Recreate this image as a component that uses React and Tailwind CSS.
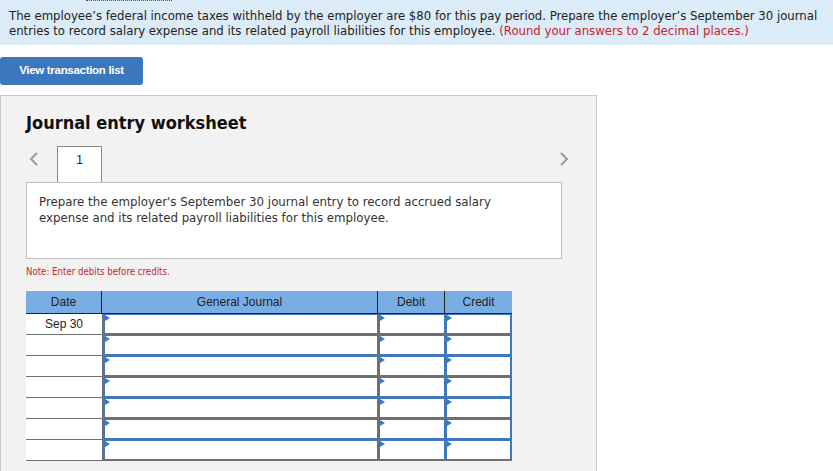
import React from 'react';

const rows = ['Sep 30', '', '', '', '', '', ''];

const Flag = () => (
  <svg className="absolute left-0 top-0" width="5" height="6" viewBox="0 0 5 6">
    <polygon points="0,0 5,3 0,6" fill="#3a78cf" />
  </svg>
);

const Chevron = ({ dir }) => (
  <svg width="10" height="14" viewBox="0 0 10 14">
    <polyline
      points={dir === 'left' ? '8,1 2,7 8,13' : '2,1 8,7 2,13'}
      fill="none"
      stroke="#9a9a9a"
      strokeWidth="2"
    />
  </svg>
);

const InputCell = ({ width }) => (
  <div className={`${width} h-full border-l border-[#707070] bg-white`}>
    <div className="relative h-full border border-[#3f77bd] bg-white">
      <Flag />
    </div>
  </div>
);

const App = () => {
  return (
    <div className="w-[833px] h-[471px] overflow-hidden bg-white font-['DejaVu_Sans',sans-serif]">
      {/* Question banner */}
      <div className="bg-[#dcebf8] pl-[9px] pr-2 pb-[7px] text-[13px] leading-[15px] text-[#222] font-['DejaVu_Sans_Condensed','DejaVu_Sans',sans-serif]">
        <div className="ml-[77px] w-[86px] border-t border-dotted border-[#555]"></div>
        <p className="pt-[7px] whitespace-nowrap">
          The employee’s federal income taxes withheld by the employer are $80 for this pay period. Prepare the employer’s September 30 journal
          <br />
          entries to record salary expense and its related payroll liabilities for this employee.{' '}
          <span className="text-[#c8232c]">(Round your answers to 2 decimal places.)</span>
        </p>
      </div>

      <button className="mt-[12px] w-[143px] h-[28px] rounded-[3px] bg-[#3a77be] text-white text-[11.5px] font-bold font-['Liberation_Sans',sans-serif] tracking-[-0.3px]">
        View transaction list
      </button>

      {/* Worksheet panel */}
      <div className="mt-[10px] w-[597px] h-[400px] border border-[#c8c8c8] bg-[#f2f2f2] pl-[25px] pt-[15px]">
        <h2 className="text-[18px] font-bold leading-[24px] text-[#111] font-['DejaVu_Sans_Condensed','DejaVu_Sans',sans-serif]">
          Journal entry worksheet
        </h2>

        <div className="mt-[11px] flex items-end w-[536px]">
          <div className="w-[31px] pl-[3px] pb-[16px]">
            <Chevron dir="left" />
          </div>
          <div className="w-[45px] h-[36px] border border-b-0 border-[#888] bg-white text-center pt-[4px] text-[12px] font-['Liberation_Sans',sans-serif] text-[#222]">
            1
          </div>
          <div className="ml-auto pb-[16px] mr-[-7px]">
            <Chevron dir="right" />
          </div>
        </div>

        <div className="w-[536px] h-[77px] border border-[#c0c0c0] bg-white px-[12px] pt-[11px] text-[11.8px] leading-[16px] text-[#333]">
          Prepare the employer's September 30 journal entry to record accrued salary
          <br />
          expense and its related payroll liabilities for this employee.
        </div>

        <p className="mt-[6px] text-[9.6px] leading-[14px] text-[#c8232c] font-['DejaVu_Sans_Condensed','DejaVu_Sans',sans-serif]">
          Note: Enter debits before credits.
        </p>

        {/* Journal table */}
        <div className="mt-[12px] w-[486px] font-['Liberation_Sans',sans-serif] text-[12px] text-[#222]">
          <div className="flex h-[23px] bg-[#7aade4] border-b border-[#222] items-center">
            <div className="w-[76px] text-center border-r border-[#222] h-full leading-[22px]">Date</div>
            <div className="w-[276px] text-center border-r border-[#222] h-full leading-[22px]">General Journal</div>
            <div className="w-[67px] text-center border-r border-[#222] h-full leading-[22px]">Debit</div>
            <div className="w-[67px] text-center h-full leading-[22px]">Credit</div>
          </div>
          {rows.map((d, i) => (
            <div key={i} className="flex h-[21px] border-b border-[#707070]">
              <div className="w-[76px] bg-white text-center leading-[20px]">{d}</div>
              <div className="w-[1px] bg-[#707070]"></div>
              <InputCell width="w-[275px]" />
              <InputCell width="w-[67px]" />
              <div className="w-[67px] h-full border-l border-r border-[#707070] bg-white">
                <div className="relative h-full border border-[#3f77bd] bg-white">
                  <Flag />
                </div>
              </div>
            </div>
          ))}
        </div>
      </div>
    </div>
  );
};

export default App;
